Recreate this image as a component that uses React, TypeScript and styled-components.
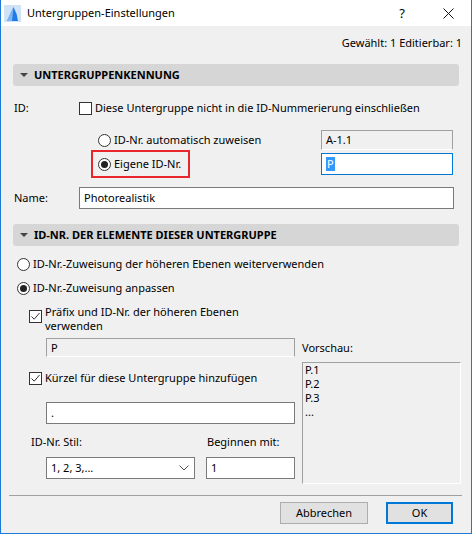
import styled, { createGlobalStyle } from 'styled-components';

const GlobalStyle = createGlobalStyle`
  html, body {
    margin: 0;
    padding: 0;
    background: #ffffff;
  }
  body {
    font-family: "Noto Sans", "Liberation Sans", sans-serif;
    font-size: 11px;
    line-height: 16px;
    color: #000;
  }
  * { box-sizing: border-box; }
`;

// Window chrome
const Dialog = styled.div`
  width: 472px;
  height: 534px;
  border: 1px solid #1a7ad4;
  border-top: none;
  display: flex;
  flex-direction: column;
  background: #f0f0f0;
`;

const TitleBar = styled.div`
  height: 26px;
  background: #fff;
  display: flex;
  align-items: center;
  padding-left: 3px;
`;

const TitleText = styled.span`
  margin-left: 6px;
  flex: 1;
`;

const TitleButton = styled.div<{ $w: number }>`
  width: ${p => p.$w}px;
  height: 26px;
  display: flex;
  align-items: center;
  justify-content: center;
  font-size: 13px;
`;

const Body = styled.div`
  flex: 1;
  display: flex;
  flex-direction: column;
  padding: 0 12px;
`;

const Info = styled.div`
  margin-top: 9px;
  margin-right: -3px;
  height: 16px;
  text-align: right;
`;

const SectionHeader = styled.div<{ $top: number }>`
  margin-top: ${p => p.$top}px;
  height: 22px;
  background: #d6d6d6;
  border-radius: 3px;
  display: flex;
  align-items: center;
  padding-left: 7px;
  font-weight: 700;
`;

const Caret = styled.span`
  width: 0;
  height: 0;
  border-left: 4px solid transparent;
  border-right: 4px solid transparent;
  border-top: 4px solid #444;
  margin-right: 6px;
`;

const Row = styled.div<{ $top?: number; $h?: number; $pl?: number }>`
  display: flex;
  align-items: center;
  margin-top: ${p => p.$top ?? 0}px;
  height: ${p => (p.$h ? `${p.$h}px` : 'auto')};
  padding-left: ${p => p.$pl ?? 0}px;
`;

const Label = styled.span<{ $w?: number }>`
  width: ${p => (p.$w ? `${p.$w}px` : 'auto')};
  padding-left: 1px;
  flex-shrink: 0;
`;

const Box = styled.span`
  width: 13px;
  height: 13px;
  border: 1px solid #333;
  background: #fff;
  flex-shrink: 0;
  margin-right: 3px;
  display: flex;
  align-items: center;
  justify-content: center;
`;

const Radio = styled.span<{ $on?: boolean }>`
  width: 13px;
  height: 13px;
  border: 1px solid #333;
  border-radius: 50%;
  background: #fff;
  flex-shrink: 0;
  margin-right: 3px;
  display: flex;
  align-items: center;
  justify-content: center;
  &::after {
    content: '';
    width: 7px;
    height: 7px;
    border-radius: 50%;
    background: ${p => (p.$on ? '#222' : 'transparent')};
  }
`;

const Option = styled.div<{ $w?: number }>`
  display: flex;
  align-items: center;
  width: ${p => (p.$w ? `${p.$w}px` : 'auto')};
`;

const Highlighted = styled.div`
  display: flex;
  align-items: center;
  height: 28px;
  width: 99px;
  border: 2px solid #e8262b;
  margin-left: -7px;
  padding-left: 5px;
  margin-right: 131px;
`;

const Field = styled.div<{ $w: number; $h: number; $variant?: 'plain' | 'focus' | 'disabled' }>`
  width: ${p => p.$w}px;
  height: ${p => p.$h}px;
  flex-shrink: 0;
  display: flex;
  align-items: center;
  padding-left: 4px;
  background: ${p => (p.$variant === 'disabled' ? '#f0f0f0' : '#fff')};
  border: 1px solid
    ${p =>
      p.$variant === 'focus' ? '#0078d7' : p.$variant === 'disabled' ? '#a0a0a0' : '#7a7a7a'};
  ${p => (p.$variant === 'disabled' ? 'border-bottom-color: #ffffff;' : '')}
`;

const Selected = styled.span`
  background: #3399ff;
  color: #fff;
  padding: 0 1px;
  line-height: 14px;
`;

const Columns = styled.div`
  display: flex;
  gap: 7px;
  padding-left: 16px;
`;

const LeftCol = styled.div`
  width: 266px;
  display: flex;
  flex-direction: column;
`;

const RightCol = styled.div`
  flex: 1;
  display: flex;
  flex-direction: column;
  padding-top: 44px;
  margin-right: -2px;
`;

const TwoLine = styled.div`
  display: flex;
  align-items: flex-start;
  margin-top: 9px;
  line-height: 14px;
  & > span:first-child {
    margin-top: 5px;
  }
`;

const Preview = styled.div`
  margin-top: 6px;
  height: 122px;
  border: 1px solid #a0a0a0;
  border-right-color: #fff;
  border-bottom-color: #fff;
  padding: 0 2px;
  line-height: 14px;
`;

const SelectBox = styled(Field)`
  justify-content: space-between;
  padding-right: 5px;
`;

const Separator = styled.div`
  margin: 11px -3px 0 -4px;
  height: 1px;
  background: #a0a0a0;
`;

const Footer = styled.div`
  display: flex;
  justify-content: flex-end;
  gap: 18px;
  margin-top: 6px;
  margin-right: 6px;
`;

const Button = styled.div<{ $primary?: boolean; $w: number }>`
  width: ${p => p.$w}px;
  height: 22px;
  display: flex;
  align-items: center;
  justify-content: center;
  background: #e1e1e1;
  border: ${p => (p.$primary ? '2px solid #0078d7' : '1px solid #adadad')};
`;

const Check = () => (
  <svg width="11" height="11" viewBox="0 0 11 11">
    <path d="M1.5 5.5 L4.2 8.2 L9.5 2" fill="none" stroke="#333" strokeWidth="1" />
  </svg>
);

function App() {
  return (
    <Dialog>
      <GlobalStyle />
      <TitleBar>
        <svg width="17" height="17" viewBox="0 0 17 17">
          <rect x="0" y="0" width="17" height="17" fill="#cfe2f6" />
          <path d="M3 16 L9.5 2 Q13 8 14 16 Z" fill="#1f7be6" />
          <path d="M3 16 L9.5 2 L8 16 Z" fill="#7fb6f2" />
        </svg>
        <TitleText>Untergruppen-Einstellungen</TitleText>
        <TitleButton $w={46}>?</TitleButton>
        <TitleButton $w={46}>
          <svg width="11" height="11" viewBox="0 0 11 11">
            <path d="M0.5 0.5 L10.5 10.5 M10.5 0.5 L0.5 10.5" stroke="#111" strokeWidth="1" />
          </svg>
        </TitleButton>
      </TitleBar>
      <Body>
        <Info>Gewählt: 1 Editierbar: 1</Info>

        <SectionHeader $top={13}>
          <Caret />
          UNTERGRUPPENKENNUNG
        </SectionHeader>

        <Row $top={14} $h={16}>
          <Label $w={66}>ID:</Label>
          <Box />
          <span>Diese Untergruppe nicht in die ID-Nummerierung einschließen</span>
        </Row>

        <Row $top={14} $h={20} $pl={85}>
          <Option $w={223}>
            <Radio />
            ID-Nr. automatisch zuweisen
          </Option>
          <Field $w={132} $h={20} $variant="disabled">
            A-1.1
          </Field>
        </Row>

        <Row $h={28} $pl={85}>
          <Highlighted>
            <Radio $on />
            Eigene ID-Nr.
          </Highlighted>
          <Field $w={132} $h={22} $variant="focus">
            <Selected>P</Selected>
          </Field>
        </Row>

        <Row $top={9} $h={22}>
          <Label $w={66}>Name:</Label>
          <Field $w={375} $h={22}>
            Photorealistik
          </Field>
        </Row>

        <SectionHeader $top={15}>
          <Caret />
          ID-NR. DER ELEMENTE DIESER UNTERGRUPPE
        </SectionHeader>

        <Row $top={10} $h={16} $pl={4}>
          <Radio />
          ID-Nr.-Zuweisung der höheren Ebenen weiterverwenden
        </Row>
        <Row $top={8} $h={16} $pl={4}>
          <Radio $on />
          ID-Nr.-Zuweisung anpassen
        </Row>

        <Columns>
          <LeftCol>
            <TwoLine>
              <Box>
                <Check />
              </Box>
              <span>
                Präfix und ID-Nr. der höheren Ebenen
                <br />
                verwenden
              </span>
            </TwoLine>
            <Row $top={5} $pl={17}>
              <Field $w={249} $h={19} $variant="disabled">
                P
              </Field>
            </Row>
            <Row $top={13} $h={16}>
              <Box>
                <Check />
              </Box>
              Kürzel für diese Untergruppe hinzufügen
            </Row>
            <Row $top={16} $pl={17}>
              <Field $w={249} $h={22}>
                .
              </Field>
            </Row>
            <Row $top={10} $h={16} $pl={1}>
              <Label $w={176}>ID-Nr. Stil:</Label>
              <Label>Beginnen mit:</Label>
            </Row>
            <Row $top={7} $pl={17}>
              <SelectBox $w={149} $h={22}>
                1, 2, 3,...
                <svg width="10" height="6" viewBox="0 0 10 6">
                  <path d="M0.5 0.5 L5 5 L9.5 0.5" fill="none" stroke="#555" strokeWidth="1" />
                </svg>
              </SelectBox>
              <span style={{ width: 11 }} />
              <Field $w={89} $h={22}>
                1
              </Field>
            </Row>
          </LeftCol>
          <RightCol>
            <span>Vorschau:</span>
            <Preview>
              P.1
              <br />
              P.2
              <br />
              P.3
              <br />
              ...
            </Preview>
          </RightCol>
        </Columns>

        <Separator />
        <Footer>
          <Button $w={88}>Abbrechen</Button>
          <Button $w={67} $primary>
            OK
          </Button>
        </Footer>
      </Body>
    </Dialog>
  );
}

export default App;
